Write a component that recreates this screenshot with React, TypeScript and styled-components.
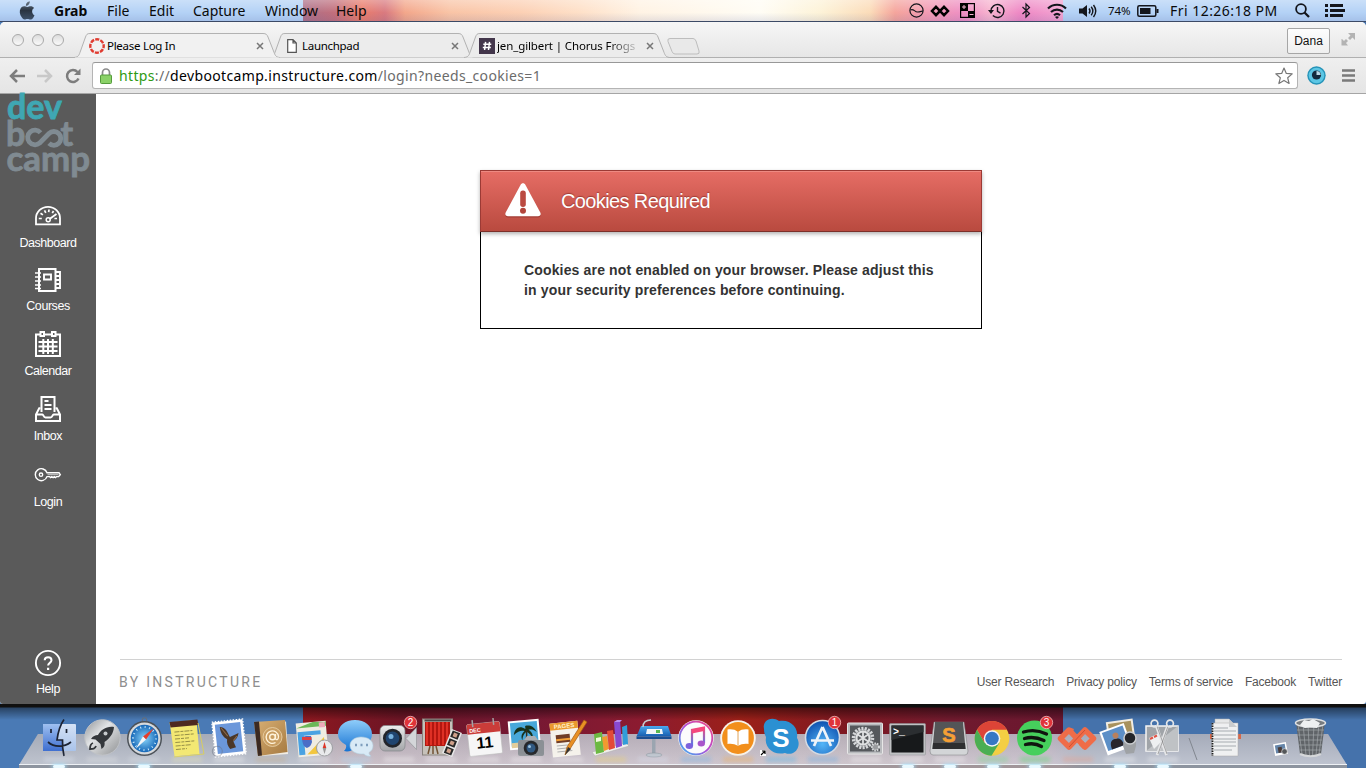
import React from "react";
import styled, { createGlobalStyle } from "styled-components";

const lucida = `"Noto Sans", "Open Sans", sans-serif`;
const helvetica = `"Liberation Sans", Arial, sans-serif`;

const GlobalStyle = createGlobalStyle`
  *, *::before, *::after { box-sizing: border-box; }
  body { margin: 0; overflow: hidden; }
  svg { display: block; overflow: visible; }
`;

const Desktop = styled.div`
  width: 1366px;
  height: 768px;
  display: flex;
  flex-direction: column;
  overflow: hidden;
  background: linear-gradient(90deg, #4a7ab5 0 303px, #7b1425 303px 1063px, #4572ab 1063px);
`;

/* ---------- system menu bar ---------- */

const MenuBar = styled.header`
  height: 22px;
  flex: none;
  display: flex;
  align-items: center;
  border-bottom: 1px solid #3c4a66;
  font: 14px/20px ${lucida};
  color: #0a0a0a;
  background:
    linear-gradient(180deg, rgba(255, 255, 255, 0.3), rgba(255, 255, 255, 0) 60%, rgba(60, 70, 140, 0.12)),
    linear-gradient(
      90deg,
      #b4d2f6 0 303px,
      #ad7189 303px,
      #c26f7c 335px,
      #ea7d6c 362px,
      #d97a80 385px,
      #f3a78b 405px,
      #f9c4a6 450px,
      #fcd0b4 520px,
      #fee0c8 580px,
      #fff3e4 640px,
      #fffdf5 760px,
      #fdf3d8 820px,
      #fbdcb9 870px,
      #f5a59c 895px,
      #f29ab5 930px,
      #ee8fc4 965px,
      #f7b4cf 990px,
      #ee88c4 1020px,
      #f3a4d2 1063px,
      #b4d2f6 1063px
    );
`;

const AppleSlot = styled.div`
  width: 54px;
  padding-left: 19px;
`;

const MenuItem = styled.span<{ $w: number; $bold?: boolean }>`
  width: ${(p) => p.$w}px;
  font-weight: ${(p) => (p.$bold ? 700 : 400)};
  white-space: nowrap;
`;

const StatusArea = styled.div`
  margin-left: auto;
  width: 458px;
  display: flex;
  align-items: center;
`;

const StatusSlot = styled.div<{ $w: number }>`
  width: ${(p) => p.$w}px;
  flex: none;
  display: flex;
  justify-content: center;
`;

const StatusText = styled.span<{ $w: number; $pad: number; $size: number; $ls?: number }>`
  width: ${(p) => p.$w}px;
  flex: none;
  padding-left: ${(p) => p.$pad}px;
  font-size: ${(p) => p.$size}px;
  letter-spacing: ${(p) => p.$ls ?? 0}px;
  white-space: nowrap;
`;

/* ---------- browser window ---------- */

const BrowserWindow = styled.div`
  position: relative;
  z-index: 1;
  height: 682px;
  flex: none;
  display: flex;
  flex-direction: column;
  border-radius: 5px 5px 3px 3px;
  overflow: hidden;
  background: #fff;
`;

const TabStrip = styled.div`
  height: 36px;
  flex: none;
  display: flex;
  align-items: flex-end;
  background: linear-gradient(180deg, #f6f6f6, #e6e6e6);
  box-shadow: inset 0 -1px 0 #b0b0b0;
`;

const WindowButtons = styled.div`
  width: 77px;
  height: 35px;
  padding: 0 0 2px 12px;
  display: flex;
  align-items: center;
  gap: 8px;
`;

const WindowButton = styled.span`
  width: 12px;
  height: 12px;
  border-radius: 50%;
  border: 1px solid #a9a9a9;
  background: linear-gradient(180deg, #dcdcdc, #fafafa);
`;

const TabBox = styled.div<{ $active?: boolean; $w: number }>`
  position: relative;
  z-index: ${(p) => (p.$active ? 2 : 1)};
  width: ${(p) => p.$w}px;
  height: 25px;
  flex: none;
  display: flex;
  align-items: center;
  padding-left: 12px;
`;

const TabShape = styled.svg`
  position: absolute;
  left: -2px;
  top: 0;
`;

const TabIcon = styled.span`
  position: relative;
  width: 16px;
  height: 16px;
  flex: none;
  display: flex;
  align-items: center;
  justify-content: center;
`;

const TabTitle = styled.span<{ $fade?: boolean; $ls?: number }>`
  position: relative;
  width: 141px;
  margin-left: 2px;
  margin-right: 8px;
  flex: none;
  overflow: hidden;
  white-space: nowrap;
  font: 11.5px/18px ${lucida};
  letter-spacing: ${(p) => p.$ls ?? 0}px;
  color: #000;
  ${(p) => p.$fade && "mask-image: linear-gradient(90deg, #000 110px, transparent 145px);"}
`;

const CloseMark = styled.svg`
  position: relative;
  flex: none;
`;

const NewTab = styled.svg`
  margin-bottom: 3px;
`;

const UserButton = styled.div`
  width: 43px;
  height: 26px;
  margin: 0 11px 4px auto;
  border: 1px solid #a6a6a6;
  border-radius: 2px;
  background: linear-gradient(180deg, #fdfdfd, #efefef);
  font: 12px/25px ${helvetica};
  text-align: center;
  color: #111;
`;

const Expand = styled.svg`
  margin: 0 10px 11px 0;
`;

const Toolbar = styled.div`
  height: 36px;
  flex: none;
  display: flex;
  align-items: center;
  background: linear-gradient(180deg, #efefef, #e5e5e5);
  border-bottom: 1px solid #a5a5a5;
`;

const NavButtons = styled.div`
  width: 92px;
  padding-left: 9px;
  display: flex;
  align-items: center;
  gap: 12px;
`;

const Omnibox = styled.div`
  width: 1206px;
  height: 27px;
  display: flex;
  align-items: center;
  padding: 0 4px 0 7px;
  border: 1px solid #b4b4b4;
  border-top-color: #989898;
  border-radius: 3px;
  background: #fff;
`;

const Url = styled.span`
  margin-left: 7px;
  flex: 1;
  font: 14px/24px ${lucida};
  letter-spacing: 0.35px;
  color: #6b6b6b;
  white-space: nowrap;
`;

const UrlScheme = styled.span`
  color: #2d9a12;
`;

const UrlHost = styled.span`
  color: #000;
`;

const ToolbarEnd = styled.div`
  flex: 1;
  padding: 0 11px 0 9px;
  display: flex;
  align-items: center;
  justify-content: space-between;
`;

/* ---------- page ---------- */

const Page = styled.div`
  flex: 1;
  display: flex;
  min-height: 0;
`;

const Sidebar = styled.nav`
  width: 96px;
  flex: none;
  display: flex;
  flex-direction: column;
  background: #5a5a5a;
`;

const LogoBox = styled.div`
  height: 108px;
  flex: none;
`;

const NavItem = styled.a<{ $h: number; $gap?: number; $last?: boolean }>`
  height: ${(p) => p.$h}px;
  flex: none;
  display: flex;
  flex-direction: column;
  align-items: center;
  gap: ${(p) => p.$gap ?? 6}px;
  ${(p) => p.$last && "margin-top: auto;"}
  font: 12.5px/16px ${helvetica};
  letter-spacing: -0.45px;
  color: #fff;
`;

const NavIcon = styled.span`
  height: 26px;
`;

const Content = styled.main`
  flex: 1;
  display: flex;
  flex-direction: column;
  align-items: flex-start;
  padding: 76px 24px 0 24px;
`;

const Notice = styled.section`
  width: 502px;
  height: 159px;
  margin-left: 360px;
  border: 1px solid #000;
  border-top: 0;
`;

const NoticeHeader = styled.div`
  height: 62px;
  margin: 0 -1px;
  display: flex;
  align-items: center;
  padding-left: 24px;
  border: 1px solid #9c3a35;
  border-bottom-color: #7c302a;
  background: linear-gradient(180deg, #e66d65, #b94a3f);
  box-shadow: inset 0 1px 0 #ee8a82, 0 2px 4px rgba(0, 0, 0, 0.3);
`;

const NoticeTitle = styled.h2`
  margin: 0 0 0 20px;
  font: 400 20px/26px ${helvetica};
  letter-spacing: -0.62px;
  color: #fff;
  text-shadow: 0 -1px 1px rgba(90, 20, 15, 0.45);
`;

const NoticeText = styled.p`
  margin: 28px 0 0 43px;
  width: 440px;
  font: 700 14px/20px ${helvetica};
  letter-spacing: 0.155px;
  color: #333;
`;

const Footer = styled.footer`
  width: 100%;
  height: 45px;
  margin-top: auto;
  padding-bottom: 1px;
  display: flex;
  align-items: center;
  justify-content: space-between;
  border-top: 1px solid #d2d2d2;
`;

const Brand = styled.span`
  margin-left: -1px;
  font: 400 14px/18px Roboto, sans-serif;
  letter-spacing: 2.3px;
  color: #8e8e8e;
`;

const FooterLinks = styled.div`
  display: flex;
  gap: 12px;
`;

const FooterLink = styled.a`
  font: 12px/16px ${helvetica};
  letter-spacing: -0.2px;
  color: #555;
  white-space: nowrap;
`;

/* ---------- dock ---------- */

const DockArea = styled.div`
  position: relative;
  flex: 1;
  padding: 12px 0 0 38px;
  background:
    linear-gradient(180deg, #101010 0 3px, rgba(0, 0, 0, 0.45) 4px, rgba(0, 0, 0, 0) 16px),
    linear-gradient(
      90deg,
      transparent 0 303px,
      #8d1820 303px,
      #6c1525 400px,
      #741833 520px,
      #8c1b30 640px,
      #9c2018 740px,
      #7c1822 850px,
      #701a2e 950px,
      #6b1730 1063px,
      transparent 1063px
    );
`;

const Shelf = styled.div`
  position: absolute;
  left: 19px;
  top: 30px;
  width: 1328px;
  height: 31px;
  clip-path: polygon(19px 0, 1309px 0, 1328px 100%, 0 100%);
  background:
    linear-gradient(180deg, rgba(135, 140, 155, 0.3), rgba(215, 218, 226, 0.35)),
    linear-gradient(90deg, #b2b8c4 0 284px, #c5b3bb 320px, #c9bbc4 600px, #cabcc2 860px, #c8bac6 1030px, #b2b8c6 1060px);
`;

const ShelfEdge = styled.div`
  position: absolute;
  left: 19px;
  top: 60px;
  width: 1328px;
  height: 4px;
  border-top: 1px solid #eef1f5;
  background: linear-gradient(90deg, #8d949f 0 284px, #a1969a 320px 1040px, #8d949f 1070px);
`;

const DockRow = styled.div`
  position: relative;
  display: flex;
`;

const DockSlot = styled.div<{ $w?: number }>`
  width: ${(p) => p.$w ?? 42.45}px;
  height: 52px;
  flex: none;
  display: flex;
  flex-direction: column;
  justify-content: space-between;
  align-items: center;
`;

const Reflection = styled.span<{ $c: string }>`
  width: 30px;
  height: 5px;
  margin-top: -4px;
  background: ${(p) => p.$c};
  opacity: 0.32;
  filter: blur(2px);
`;

const RunningLight = styled.span<{ $on?: boolean }>`
  width: 12px;
  height: 3px;
  border-radius: 2px;
  background: ${(p) => (p.$on ? "#e9f9ff" : "transparent")};
  box-shadow: ${(p) => (p.$on ? "0 0 4px 1px #a9e2fb" : "none")};
`;

/* ---------- icons ---------- */

const AppleLogo = () => (
  <svg width="16" height="19" viewBox="0 0 16 19">
    <defs>
      <linearGradient id="apple" x1="0" y1="0" x2="0" y2="1">
        <stop offset="0" stopColor="#6a7784" />
        <stop offset="0.5" stopColor="#2a3441" />
        <stop offset="1" stopColor="#3d5068" />
      </linearGradient>
    </defs>
    <path
      fill="url(#apple)"
      d="M10.8.3c.1 1.300-.4 2.400-1.100 3.200-.7.800-1.800 1.400-2.800 1.300-.1-1.200.4-2.400 1.100-3.100C8.700.900 9.900.4 10.800.3zM15.500 14.300c-.5 1.200-.8 1.700-1.400 2.600-.9 1.300-1.800 1.700-2.700 1.700-1 0-1.600-.6-2.900-.6s-2 .6-2.900.6c-1 0-1.900-.8-2.700-2C.5 13.300.2 9.600 1.600 7.400c.8-1.300 2.100-2.100 3.400-2.100 1.400 0 2.300.7 3.400.7 1.100 0 1.800-.7 3.400-.7 1.200 0 2.500.6 3.300 1.700-2.900 1.600-2.400 5.900.4 7.300z"
    />
  </svg>
);

const SiteTab = ({ title, icon, active, fade, w, ls }: { title: string; icon: React.ReactNode; active?: boolean; fade?: boolean; w: number; ls?: number }) => (
  <TabBox $active={active} $w={w}>
    <TabShape width="204" height="25" viewBox="0 0 204 25">
      <path
        d="M-1 24.500C4 24 4 22 5.500 18L10.500 4C11.500 1.500 12 .5 15 .5H188c3 0 4 1 5 3.500l5.500 14c1.500 4 2 6 6 6.500"
        fill={active ? "#f1f1f1" : "#ececec"}
        stroke="#b2b2b2"
      />
      {active && <path d="M0 25H204" stroke="#efefef" strokeWidth="1" />}
    </TabShape>
    <TabIcon>{icon}</TabIcon>
    <TabTitle $fade={fade} $ls={ls}>{title}</TabTitle>
    <CloseMark width="8" height="8" viewBox="0 0 8 8">
      <path d="M1 1l6 6M7 1L1 7" stroke="#777" strokeWidth="1.500" />
    </CloseMark>
  </TabBox>
);

const CanvasRing = () => (
  <svg width="16" height="16" viewBox="0 0 16 16">
    <circle cx="8" cy="8" r="6.700" fill="none" stroke="#e03c31" strokeWidth="2.400" strokeDasharray="4.100 1.160" strokeDashoffset="2" />
  </svg>
);

const PageIcon = () => (
  <svg width="10" height="14" viewBox="0 0 10 14">
    <path d="M.7.7h5.300l3.300 3.300v9.300H.7z M6 .7v3.300h3.300" fill="#fff" stroke="#555" strokeWidth="1.200" />
  </svg>
);

const HashIcon = () => (
  <svg width="16" height="16" viewBox="0 0 16 16">
    <rect width="16" height="16" fill="#43364b" />
    <path d="M6.600 3.800L5.600 12M10.500 3.800L9.500 12M4.300 6.300h8M3.800 9.600h8" stroke="#fff" strokeWidth="1.500" />
  </svg>
);

const DashboardIcon = () => (
  <svg width="26" height="26" viewBox="0 0 26 26" fill="none" stroke="#fff">
    <path d="M1 22.300v-6a12 11.500 0 0 1 24 0v6z" strokeWidth="1.800" />
    <path d="M3.800 16.500h3M5.500 11.200l2.400 1.700M9.500 8.300l1.300 2.500M14 7.500l-.3 2.700M18.500 9l-1.200 2.200M22 16.500h-2.600" strokeWidth="1.700" />
    <path d="M14.500 17l7-5" strokeWidth="1.900" />
    <circle cx="13.200" cy="17.800" r="2" strokeWidth="1.500" />
  </svg>
);

const CoursesIcon = () => (
  <svg width="26" height="26" viewBox="0 0 26 26" fill="none" stroke="#fff" strokeWidth="2">
    <path d="M4 2h16.500v22H4z" />
    <path d="M9 7.500h7v5H9z" strokeWidth="1.900" />
    <path d="M0 6h6M0 10h6M0 14h6M0 18h6M0 21.500h6" strokeWidth="1.700" />
    <path d="M21 5h4v16h-4M21 9h4M21 13h4M21 17h4" strokeWidth="1.900" />
  </svg>
);

const CalendarIcon = () => (
  <svg width="26" height="26" viewBox="0 0 26 26" fill="none" stroke="#fff" strokeWidth="2">
    <path d="M1 3.500h24v21.500H1z" />
    <path d="M3.500 11h19M3.500 15.500h19M3.500 20h19M8.300 8v15M13 8v15M17.800 8v15" strokeWidth="2" />
    <path d="M5.500 1h3.500v4H5.500zM17 1h3.500v4H17z" fill="#5a5a5a" strokeWidth="2" />
  </svg>
);

const InboxIcon = () => (
  <svg width="26" height="26" viewBox="0 0 26 26" fill="none" stroke="#fff" strokeWidth="2">
    <path d="M6.500 16V1h13v15" />
    <path d="M9.500 5h4M9.500 9h7M9.500 13h7" strokeWidth="1.800" />
    <path d="M5.500 12.200H4.200L1 18.500V25h24v-6.500l-3.200-6.300h-1.300M1 18.500h6.500c1 0 1 3 3 3h5c2 0 2-3 3-3H25" />
  </svg>
);

const KeyIcon = () => (
  <svg width="26" height="26" viewBox="0 0 26 26" fill="none" stroke="#fff" strokeWidth="1.400">
    <path d="M12 10.800h12l1.300 1.800-1.700 2h-2l-1 1-1.300-1-1.200 1-1.300-1-1.300 1-1-1H12a6 6 0 1 1 0-3.800z" />
    <circle cx="6" cy="12.700" r="1.700" />
    <path d="M12.500 12.700h11" strokeWidth="0.700" />
  </svg>
);

const HelpIcon = () => (
  <svg width="26" height="26" viewBox="0 0 26 26" fill="none" stroke="#fff" strokeWidth="1.900">
    <circle cx="13" cy="13" r="12.100" />
    <path d="M9.700 10.300c0-4.200 6.800-4.200 6.800 0 0 2.700-3.400 2.500-3.400 5.200" strokeWidth="2" />
    <path d="M13.100 17.700v2.200" strokeWidth="2.200" />
  </svg>
);

const LogoText = styled.text`
  font: 700 34px Lato, sans-serif;
  stroke-width: 0.8px;
`;

const teal = "#3fa7b3";
const slate = "#808b92";

const Logo = () => (
  <svg width="96" height="90" viewBox="0 0 96 90">
    <LogoText x="7" y="25" fill={teal} stroke={teal} textLength="55" lengthAdjust="spacingAndGlyphs">dev</LogoText>
    <LogoText x="6" y="52" fill={slate} stroke={slate}>b</LogoText>
    <path d="M40.500 38.700A7.300 7.300 0 1 0 39.500 49.200L49 39.500A6.900 6.900 0 1 1 49 49.300" fill="none" stroke={slate} strokeWidth="4.800" />
    <LogoText x="60.500" y="52" fill={slate} stroke={slate}>t</LogoText>
    <LogoText x="6.500" y="77" fill={slate} stroke={slate} textLength="83.500" lengthAdjust="spacingAndGlyphs">camp</LogoText>
  </svg>
);

const WarningIcon = () => (
  <svg width="36" height="36" viewBox="0 0 36 36">
    <path d="M15.500 3c1-2.200 4-2.200 5 0L35.300 30.500c1 2.200 0 4-2.300 4H3c-2.300 0-3.300-1.800-2.300-4z" fill="#8e3029" opacity="0.6" />
    <path d="M15.500 2c1-2.200 4-2.200 5 0L35.300 29.500c1 2.200 0 3.700-2.300 3.700H3c-2.300 0-3.300-1.500-2.300-3.700z" fill="#fff" />
    <rect x="15.200" y="7.500" width="5.600" height="16.500" rx="2.700" fill="#bb4a41" />
    <circle cx="18" cy="27.700" r="3" fill="#b3453b" />
  </svg>
);

/* Each dock drawing lives on a tile 42 units high. */
const Tile = ({ children, w = 42 }: { children: React.ReactNode; w?: number }) => (
  <svg width={w} height="42" viewBox={`0 0 ${w} 42`}>{children}</svg>
);

const BadgeLabel = styled.text`
  font: 10px ${helvetica};
  text-anchor: middle;
  fill: #fff;
`;

const Badge = ({ n }: { n: number }) => (
  <g>
    <circle cx="32.500" cy="6.500" r="6.200" fill="#e0343a" stroke="#f3b9b9" strokeWidth="0.800" />
    <BadgeLabel x="32.500" y="10">{n}</BadgeLabel>
  </g>
);

const Finder = () => (
  <Tile>
    <defs>
      <linearGradient id="fl" x1="0" y1="0" x2="0" y2="1"><stop offset="0" stopColor="#9fc0f0" /><stop offset="1" stopColor="#3f6fd0" /></linearGradient>
      <linearGradient id="fr" x1="0" y1="0" x2="0" y2="1"><stop offset="0" stopColor="#d5e2f5" /><stop offset="1" stopColor="#a9c3ea" /></linearGradient>
    </defs>
    <rect x="5" y="8" width="33" height="27" rx="1" fill="url(#fr)" />
    <path d="M5 8h19c-3 6-4 10-5 16h5c0 4 0 7 1 11H5z" fill="url(#fl)" />
    <path d="M26 3.500c-5 7-6 13-7 20.500h5.500c-.2 6 .3 11 1.500 16M10 26c6 5.500 16 5.500 23 0M13 13v4M28.500 13v4" fill="none" stroke="#1c2333" strokeWidth="1.700" />
  </Tile>
);

const Launchpad = () => (
  <Tile>
    <defs><linearGradient id="lp" x1="0" y1="0" x2="1" y2="1"><stop offset="0" stopColor="#8e9195" /><stop offset="0.400" stopColor="#e2e4e6" /><stop offset="1" stopColor="#8e9092" /></linearGradient></defs>
    <circle cx="21.500" cy="21.500" r="17.700" fill="url(#lp)" stroke="#bfc2c6" />
    <path d="M33 11c-8-1-13 3-16 8-3 0-5 1-7 4l4.500.5 5 4.500 1 5c3-2 3.500-4 3-7 5-3.500 9-8 9.500-15z" fill="#34373b" />
    <circle cx="24.500" cy="17.500" r="2" fill="#c6c9cc" />
    <path d="M12 27c-3 1-3 4-3 6 3 0 5 0 6-3" fill="none" stroke="#34373b" strokeWidth="1.800" />
  </Tile>
);

const Safari = () => (
  <Tile>
    <defs><radialGradient id="sf"><stop offset="0" stopColor="#8bd6fb" /><stop offset="1" stopColor="#1768b8" /></radialGradient></defs>
    <circle cx="21.500" cy="4" r="2.300" fill="none" stroke="#6a6e74" />
    <circle cx="21.500" cy="22.500" r="17.500" fill="#4b5158" />
    <circle cx="21.500" cy="22.500" r="16" fill="#d6d9dc" />
    <circle cx="21.500" cy="22.500" r="13.700" fill="url(#sf)" />
    <circle cx="21.500" cy="22.500" r="11.500" fill="none" stroke="#c5e8fb" strokeDasharray="1 3.500" strokeWidth="2" />
    <path d="M31 12L20 20.500l3 3z" fill="#e53e2c" />
    <path d="M12.500 33l7.500-12.500 3 3z" fill="#f4f6f8" />
  </Tile>
);

const Notes = () => (
  <Tile>
    <g transform="rotate(-5 21 22)">
      <path d="M5 5h27v34H7z" fill="#f3e873" />
      <path d="M5 4.500h28l.5 5.500H5.500z" fill="#4d2a20" />
      <path d="M9 15h18M9 18.500h20M9 22h14M9 25.500h19M9 29h16M9 32.500h11" stroke="#8e8843" strokeWidth="0.900" strokeDasharray="5 1 3 1" />
    </g>
    <path d="M32 7l6 31-30 3" fill="none" stroke="#d8ce60" />
  </Tile>
);

const Mail = () => (
  <Tile>
    <g transform="rotate(-6 21 22)">
      <rect x="7" y="6" width="28" height="32" fill="#6b97da" stroke="#fff" strokeWidth="2.500" />
      <rect x="5.500" y="4.500" width="31" height="35" fill="none" stroke="#fff" strokeWidth="1.300" strokeDasharray="1.500 1.500" />
      <path d="M13 10c6 1 7 6 9 11l9-3c-1 4-3 6-6 8l2 6-6 1c-2-3-3-6-2-10-4-3-6-7-6-13z" fill="#4b3728" />
      <path d="M14 11l6 9M25 25l4-4" stroke="#8d6b4b" />
      <circle cx="8" cy="34" r="5" fill="none" stroke="#6b7484" opacity="0.5" />
    </g>
  </Tile>
);

const Contacts = () => (
  <Tile>
    <defs><linearGradient id="ct" x1="0" y1="0" x2="1" y2="1"><stop offset="0" stopColor="#d9b075" /><stop offset="1" stopColor="#a5793f" /></linearGradient></defs>
    <path d="M36 5l2 33-28 2v-3z" fill="#f1ede4" />
    <path d="M4 6l31-2 2.500 32L8 40z" fill="url(#ct)" />
    <path d="M4 6l5-.4L12 39.500l-4 .5z" fill="#3b2a22" />
    <circle cx="22.500" cy="21" r="9.500" fill="#c99e62" stroke="#ecd6ad" strokeWidth="0.800" />
    <circle cx="22.500" cy="21" r="2.800" fill="none" stroke="#fff4dc" strokeWidth="1.400" />
    <path d="M25.500 18v4.500c.5 2 3 1.500 3-2a6.200 6.200 0 1 0-3 6" fill="none" stroke="#fff4dc" strokeWidth="1.300" />
  </Tile>
);

const Maps = () => (
  <Tile>
    <g transform="rotate(-5 20 22)">
      <rect x="4" y="6" width="30" height="34" fill="#efece2" />
      <path d="M4 11h30V7l-13-1z" fill="#6cb858" />
      <path d="M5 15h23v4H11v19H5z" fill="#49a2e2" />
      <path d="M13 38l18-16v8l-8 8z" fill="#f2c63f" />
      <path d="M27 7h6v5h-6z" fill="#efaabb" />
    </g>
    <path d="M9 21l4-1 5 0 1 6c-1 4-3 5-5 6-3-1-5-4-5-11z" fill="#4b6ec6" />
    <path d="M9 21h9.500v3H9z" fill="#dd4040" />
    <circle cx="31.500" cy="32" r="8" fill="#e9eaec" stroke="#9b9da0" />
    <path d="M31.500 26l1.800 6h-3.600z" fill="#dd3527" /><path d="M31.500 38l1.800-6h-3.600z" fill="#999" />
  </Tile>
);

const Messages = () => (
  <Tile>
    <defs><linearGradient id="ms" x1="0" y1="0" x2="0" y2="1"><stop offset="0" stopColor="#8fcdfa" /><stop offset="1" stopColor="#1672d2" /></linearGradient></defs>
    <path d="M20 4c10 0 17 6 17 14s-7 14-17 14c-3 3-7 4-11 3 2-2 2.500-4 2-6-5-3-8-6-8-11C3 10 10 4 20 4z" fill="url(#ms)" />
    <path d="M26 21c7 0 12 3.500 12 8.500 0 3-1 5-4 7 0 1.500.5 2.500 2 3.500-3 .5-5 0-7-2-8 .5-14-3-14-8.500 0-5 5-8.500 11-8.500z" fill="#d9eaf6" stroke="#b3cede" strokeWidth="0.600" />
    <path d="M20 29h2M25.500 29h2M31 29h2" stroke="#7f9ebd" strokeWidth="2.300" />
  </Tile>
);

const FaceTime = () => (
  <Tile>
    <defs><linearGradient id="ft" x1="0" y1="0" x2="0" y2="1"><stop offset="0" stopColor="#eceded" /><stop offset="1" stopColor="#a3a5a8" /></linearGradient></defs>
    <rect x="2" y="9.500" width="25" height="25.500" rx="5" fill="url(#ft)" stroke="#84878b" strokeWidth="0.700" />
    <path d="M28 22.500l10.500-11v22z" fill="#d4d6d9" stroke="#8e9094" strokeWidth="0.600" />
    <circle cx="14.500" cy="22.300" r="9.500" fill="#22252a" /><circle cx="14.500" cy="22.300" r="6.800" fill="#20456f" /><circle cx="13" cy="20.500" r="2.500" fill="#79b2dd" />
    <Badge n={2} />
  </Tile>
);

const PhotoBooth = () => (
  <Tile>
    <rect x="2.500" y="3" width="30" height="36" fill="#c6c1ba" stroke="#88827d" />
    <rect x="5" y="6" width="25" height="24" fill="#b3160f" />
    <path d="M7 6v23M11 6v23M15 6v23M19 6v23M23 6v23M27 6v23" stroke="#df3025" strokeWidth="2" />
    <path d="M4.500 4.500h27" stroke="#4d4946" strokeWidth="2" />
    <path d="M8 38l2-8M13 38v-8M18 38l-2-8" stroke="#725234" strokeWidth="1.500" />
    <g transform="rotate(22 32 27)"><rect x="26.500" y="14" width="11" height="26" fill="#e8e8e8" /><path d="M28 15h8v7h-8zM28 23.500h8v7h-8zM28 32h8v7h-8z" fill="#272727" /><path d="M30 16.500h4v4h-4zM30 25h4v4h-4zM30 33.500h4v4h-4z" fill="#cfa08a" /></g>
  </Tile>
);

const DayNumber = styled.text`
  font: 700 16px ${helvetica};
  text-anchor: middle;
`;
const MonthName = styled.text`
  font: 700 5.5px ${helvetica};
  fill: #fff;
`;

const Calendar = () => (
  <Tile>
    <g transform="rotate(-6 21 22)">
      <rect x="5" y="7" width="33" height="32" rx="1.500" fill="#f6f6f6" stroke="#bababa" strokeWidth="0.600" />
      <path d="M5 8.500Q5 7 6.500 7h30Q38 7 38 8.500V17H5z" fill="#ca3c39" />
      <MonthName x="7" y="15.500">DEC</MonthName>
      <DayNumber x="21.500" y="32">11</DayNumber>
      <path d="M11 10V3M32 10V3" stroke="#a3a3a3" strokeWidth="1.500" />
    </g>
  </Tile>
);

const IPhoto = () => (
  <Tile>
    <g transform="rotate(-5 20 20)">
      <rect x="4" y="4" width="31" height="29" fill="#fff" /><rect x="6" y="6" width="27" height="24" fill="#48a8da" />
      <path d="M6 26h27v5H6z" fill="#e2cd9a" />
      <path d="M21 13c-7-5-11 0-12 5 5-4 8-4 11-3-4 3-4 6-3 9 1-5 3-7 5-8 3 2 5 5 5 8 2-4 0-8-3-10 3 0 5 0 8 3-2-6-7-8-11-7z" fill="#17321c" />
      <path d="M22 14c0 8-1 12-3 17" fill="none" stroke="#342c1c" strokeWidth="1.500" />
    </g>
    <rect x="13" y="24" width="26" height="16" rx="2" fill="#8b9095" /><path d="M19 24l3-4h8l3 4z" fill="#abafb3" />
    <circle cx="26" cy="32" r="7.300" fill="#26282b" /><circle cx="26" cy="32" r="4.500" fill="#315981" /><circle cx="24.500" cy="30.500" r="1.500" fill="#9ec4df" />
  </Tile>
);

const PagesLabel = styled.text`
  font: 700 6px ${helvetica};
  fill: #fff3cf;
`;

const Pages = () => (
  <Tile>
    <g transform="rotate(-6 20 22)">
      <rect x="4" y="6" width="28" height="34" fill="#f5f2eb" /><path d="M4 6h28v7H4z" fill="#ea982e" />
      <PagesLabel x="8" y="11.700">PAGES</PagesLabel>
      <rect x="9" y="18" width="14" height="8" fill="#703d26" /><path d="M9 22h14v2H9z" fill="#f3a036" />
      <path d="M9 29h16M9 32h12M9 35h15" stroke="#b0b0b0" />
    </g>
    <path d="M37 4l3 2-17 27-5 6 2-8z" fill="#e99023" stroke="#a35c12" strokeWidth="0.700" />
    <path d="M18 39l3-8 3 2z" fill="#343434" />
  </Tile>
);

const Numbers = () => (
  <Tile>
    <path d="M2 36l34-9 3 3-34 10z" fill="#efefec" stroke="#aaa" strokeWidth="0.500" />
    <path d="M4 18l8-2 2 20-8 2z" fill="#6cb942" /><path d="M6 22l5-1v4l-5 1z" fill="#effad8" />
    <path d="M12 21l5-1 2 13-5 2z" fill="#f19a2f" /><path d="M17 15l6-1 2 18-6 2z" fill="#e34a37" />
    <path d="M24 6l6-2 2 26-6 2z" fill="#8749d0" /><path d="M32 11l5-2 1 19-5 1z" fill="#319dd9" />
    <path d="M24 6l3-2 5 0-2 2z" fill="#b88bea" />
  </Tile>
);

const Keynote = () => (
  <Tile>
    <defs><linearGradient id="kn" x1="0" y1="0" x2="0" y2="1"><stop offset="0" stopColor="#4aa8ef" /><stop offset="1" stopColor="#155cae" /></linearGradient></defs>
    <path d="M20 22h3.500v16H20z" fill="#9ba5b0" /><ellipse cx="22" cy="39" rx="8" ry="2" fill="#bdc4cc" stroke="#89919b" strokeWidth="0.500" />
    <path d="M9 10h27l3.500 10.500h-35z" fill="url(#kn)" /><path d="M4.500 20.500h35V23h-35z" fill="#1b4e91" />
    <path d="M15 13h15l1 5H14z" fill="#f2f5f7" /><path d="M24 14h4v3h-4z" fill="#59b951" />
    <path d="M11 11c0-5 3-7 8-7" fill="none" stroke="#c6ccd3" strokeWidth="1.500" />
  </Tile>
);

const ITunes = () => (
  <Tile>
    <defs>
      <linearGradient id="itr" x1="0" y1="1" x2="1" y2="0"><stop offset="0" stopColor="#31b9f3" /><stop offset="0.500" stopColor="#b14bd6" /><stop offset="1" stopColor="#f5487d" /></linearGradient>
      <linearGradient id="itn" x1="0" y1="0" x2="0" y2="1"><stop offset="0" stopColor="#f5487d" /><stop offset="1" stopColor="#4a7ef0" /></linearGradient>
    </defs>
    <circle cx="21" cy="22" r="17.800" fill="#f3f3f5" /><circle cx="21" cy="22" r="16.300" fill="#fbfbfc" stroke="url(#itr)" strokeWidth="1.800" />
    <path d="M17 30V14l12-2.500V27" fill="none" stroke="url(#itn)" strokeWidth="2.200" /><path d="M17 13.500l12-2.500v4l-12 2.500z" fill="#f5487d" />
    <ellipse cx="14.300" cy="30" rx="3.700" ry="3" fill="#7b62dc" /><ellipse cx="26.300" cy="27.500" rx="3.700" ry="3" fill="#a955cb" />
  </Tile>
);

const IBooks = () => (
  <Tile>
    <circle cx="21" cy="22" r="17.800" fill="#f7f3ec" /><circle cx="21" cy="22" r="15.900" fill="#f28f1c" />
    <path d="M21 16c-3-2.500-6-3-10.500-2.500V28c4-.5 7.500 0 10.500 2 3-2 6.500-2.500 10.500-2V13.500C27 13 24 13.500 21 16z" fill="#fff" /><path d="M21 16v14" stroke="#e0a45b" />
  </Tile>
);

const SkypeLetter = styled.text`
  font: 700 26px ${helvetica};
  text-anchor: middle;
  fill: #fff;
`;

const Skype = () => (
  <Tile>
    <path d="M4 13C2 4 12 0 19 5c11-2 20 6 18 17 5 8-2 19-12 15-12 3-21-6-19-16-1-2-2-4-2-8z" fill="#2b90d2" />
    <SkypeLetter x="21" y="31">S</SkypeLetter>
    <path d="M0 34h6v6H0z" fill="#fff" /><path d="M1 39l4-4M2 35h3v3" fill="none" stroke="#000" strokeWidth="1.200" />
  </Tile>
);

const AppStore = () => (
  <Tile>
    <defs><radialGradient id="as" cx="0.500" cy="0.700" r="0.700"><stop offset="0" stopColor="#53b6f8" /><stop offset="1" stopColor="#0f53b1" /></radialGradient></defs>
    <circle cx="20.500" cy="21.500" r="17.800" fill="#d5dae2" /><circle cx="20.500" cy="21.500" r="16.200" fill="url(#as)" />
    <path d="M20.500 11l-8.500 19M20.500 11l8.500 19M9 24.500h23" fill="none" stroke="#eef4f9" strokeWidth="2.700" />
    <Badge n={1} />
  </Tile>
);

const Preferences = () => (
  <Tile>
    <rect x="2.500" y="7" width="35" height="31" rx="1" fill="#b9bbbe" stroke="#e7e7e7" /><rect x="5" y="9.500" width="30" height="26" fill="#55585c" />
    <circle cx="18" cy="22" r="9.500" fill="#888b8f" stroke="#d6d8da" strokeWidth="3.500" strokeDasharray="2 1.300" />
    <circle cx="18" cy="22" r="6.500" fill="#595c60" stroke="#dfe1e2" strokeWidth="2" /><path d="M18 15v14M12 18l12 8M12 26l12-8" stroke="#dfe1e2" strokeWidth="1.800" />
    <circle cx="30.500" cy="31" r="3.500" fill="#9a9c9f" stroke="#d8dadc" strokeWidth="2" strokeDasharray="1.500 1" />
  </Tile>
);

const PromptText = styled.text`
  font: 700 10px "Liberation Mono", monospace;
  fill: #fff;
`;

const Terminal = () => (
  <Tile>
    <rect x="2.500" y="7.500" width="36" height="31.500" rx="1" fill="#bfc1c3" stroke="#8c8e90" strokeWidth="0.500" /><rect x="4.500" y="9.500" width="32" height="27" fill="#17191b" />
    <path d="M4.500 24l32-8V9.500h-32z" fill="#2b2e31" /><PromptText x="6" y="19">&gt;_</PromptText>
  </Tile>
);

const SublimeLetter = styled.text`
  font: 700 20px ${helvetica};
  text-anchor: middle;
  fill: #f6a035;
  stroke: #f6a035;
  stroke-width: 0.7px;
`;

const Sublime = () => (
  <Tile>
    <path d="M5 6h30l4 29q0 4-3 4H4q-3 0-3-4z" fill="#d3d5d7" stroke="#77797b" strokeWidth="0.500" />
    <path d="M6 6h28l2.500 27h-33z" fill="#545557" /><path d="M4 27h32l.5 6h-33z" fill="#2d2e30" /><SublimeLetter x="20" y="25.500">S</SublimeLetter>
  </Tile>
);

const Chrome = () => (
  <Tile>
    <circle cx="20" cy="22.500" r="17.300" fill="#f4ce43" />
    <path d="M5 13.800A17.300 17.300 0 0 1 35 13.800H20l-7.500 13z" fill="#dd4437" />
    <path d="M5 13.800A17.300 17.300 0 0 0 19.500 39.800L27.500 26.800l-15 0z" fill="#4aae53" />
    <circle cx="20" cy="22.500" r="8.300" fill="#f3f5f7" /><circle cx="20" cy="22.500" r="6.800" fill="#3678c4" />
  </Tile>
);

const Spotify = () => (
  <Tile>
    <circle cx="20.500" cy="22" r="17.500" fill="#46cf5c" />
    <path d="M9.500 16c8-2.500 16-1.500 23 2M10.500 22.500c7-2 13-1 19.500 2M11.500 28.500c6-1.500 11-1 16 2" fill="none" stroke="#10150f" strokeWidth="3.300" strokeLinecap="round" />
    <Badge n={3} />
  </Tile>
);

const DevBootcamp = () => (
  <Tile>
    <g fill="none" stroke="#ef6c48" strokeWidth="5.500" strokeLinejoin="round">
      <path d="M16 15.500L12 14 3.500 22.500l8.500 8.500L28 14l8.500 8.500L28 31l-4-4" />
      <path d="M12 14l16 17" />
    </g>
    <path d="M12 31L28 14" stroke="#cf4f31" strokeWidth="1" />
  </Tile>
);

const Preview = () => (
  <Tile>
    <g transform="rotate(-8 24 14)"><rect x="8" y="4" width="27" height="25" fill="#f1ece1" /><rect x="10" y="6" width="23" height="19" fill="#a8925e" /></g>
    <g transform="rotate(-20 16 24)"><rect x="4" y="11" width="26" height="25" fill="#fff" /><rect x="6" y="13" width="22" height="19" fill="#5c8fc7" /><path d="M10 32c0-7 2-9 6-9s7 2 7 9z" fill="#28252b" /><circle cx="18" cy="20" r="3" fill="#b8805d" /></g>
    <path d="M25 21h12v9l-2 7-8 1-3-8z" fill="#9fa2a5" /><circle cx="31" cy="22" r="6" fill="#232529" stroke="#cacccf" strokeWidth="1.500" />
  </Tile>
);

const GrabIcon = () => (
  <Tile>
    <rect x="4" y="10" width="32" height="25" fill="#a0a4a8" stroke="#f5f5f5" strokeWidth="1.500" /><path d="M4 35L36 10v25z" fill="#bfc2c5" />
    <path d="M7 22l10-5 4 7-9 9z" fill="#eef0f1" /><path d="M8 23l3-1.500M12 21l3-1.500" stroke="#df5547" strokeWidth="2" />
    <path d="M14 9L24.500 39M26 9L15 39" stroke="#e5e6e8" strokeWidth="2.800" /><path d="M14.500 9L25 38M26.500 9L16 38" stroke="#777" strokeWidth="0.600" />
    <circle cx="12.500" cy="7.500" r="3.400" fill="none" stroke="#e4e6e8" strokeWidth="1.700" /><circle cx="28" cy="7.500" r="3.400" fill="none" stroke="#e4e6e8" strokeWidth="1.700" />
  </Tile>
);

const DockDivider = () => (
  <Tile w={26}><path d="M8 22l8 22" stroke="#81868f" strokeWidth="1" /></Tile>
);

const Documents = () => (
  <Tile>
    <path d="M6 18h31v5H6z" fill="#d66849" />
    <path d="M11 3h14l8 8v20H11z" fill="#e6e7e8" stroke="#b0b0b0" strokeWidth="0.500" /><path d="M8 7h26v33H8z" fill="#eff0f1" stroke="#aaa" strokeWidth="0.500" />
    <path d="M10 12h14M10 15h22M10 19h22M10 23h22M10 26h22M10 30h22M10 34h18" stroke="#a6abb0" strokeWidth="1" />
    <path d="M25 3v8h8z" fill="#c9cbcd" /><path d="M8.500 7v33" stroke="#222" strokeWidth="1.800" strokeDasharray="1.500 1" />
  </Tile>
);

const MinimizedPhoto = () => (
  <Tile w={18}>
    <g transform="rotate(-10 9 33)"><rect x="2" y="27" width="13" height="12" fill="#fff" /><rect x="3.500" y="28.500" width="10" height="8" fill="#6686aa" /><path d="M6 31h4v5.500H6z" fill="#493b38" /></g>
    <circle cx="12.500" cy="35.500" r="2.800" fill="#54575a" stroke="#ddd" strokeWidth="0.700" />
  </Tile>
);

const Trash = () => (
  <Tile>
    <path d="M6 6l4 32c6 3 15 3 21 0l4-32z" fill="#606468" />
    <path d="M8 8l4 30M13 8l3 31M18 8l1.500 32M24 8l-1.500 32M29 8l-3 31M33 8l-4 30M7 14h27M8 19h25M9 24h23M9 29h23M10 34h21" stroke="#a2a6aa" strokeWidth="0.700" />
    <ellipse cx="20.500" cy="7" rx="15" ry="4" fill="#777b7f" stroke="#dfe1e3" strokeWidth="1.500" />
    <path d="M10 9l4-5 5 1 4-2 7 4-3 5-7-1-5 1z" fill="#eef0f1" /><path d="M10 38c6 3 15 3 21 0" fill="none" stroke="#d5d7d9" strokeWidth="2" />
  </Tile>
);

const dockItems: { name: string; icon: React.ReactNode; glow: string; on?: boolean }[] = [
  { name: "finder", icon: <Finder />, glow: "#e6edf8", on: true },
  { name: "launchpad", icon: <Launchpad />, glow: "#e9e9e9" },
  { name: "safari", icon: <Safari />, glow: "#e3e8ee", on: true },
  { name: "notes", icon: <Notes />, glow: "#f3ecaa" },
  { name: "mail", icon: <Mail />, glow: "#fff" },
  { name: "contacts", icon: <Contacts />, glow: "#c9a672" },
  { name: "maps", icon: <Maps />, glow: "#fff" },
  { name: "messages", icon: <Messages />, glow: "#aaddff", on: true },
  { name: "facetime", icon: <FaceTime />, glow: "#fff" },
  { name: "photobooth", icon: <PhotoBooth />, glow: "#fff" },
  { name: "calendar", icon: <Calendar />, glow: "#fff" },
  { name: "iphoto", icon: <IPhoto />, glow: "#fff" },
  { name: "pages", icon: <Pages />, glow: "#fff" },
  { name: "numbers", icon: <Numbers />, glow: "#f5d44d" },
  { name: "keynote", icon: <Keynote />, glow: "#dce8f8" },
  { name: "itunes", icon: <ITunes />, glow: "#5aaef3" },
  { name: "ibooks", icon: <IBooks />, glow: "#ffa62b" },
  { name: "skype", icon: <Skype />, glow: "#35b3f4" },
  { name: "appstore", icon: <AppStore />, glow: "#4fa7ef" },
  { name: "preferences", icon: <Preferences />, glow: "#fff" },
  { name: "terminal", icon: <Terminal />, glow: "#fff", on: true },
  { name: "sublime", icon: <Sublime />, glow: "#fff", on: true },
  { name: "chrome", icon: <Chrome />, glow: "#5fe07a", on: true },
  { name: "spotify", icon: <Spotify />, glow: "#30e050", on: true },
  { name: "devbootcamp", icon: <DevBootcamp />, glow: "#f59070" },
  { name: "preview", icon: <Preview />, glow: "#fff", on: true },
  { name: "grab", icon: <GrabIcon />, glow: "#fff", on: true },
];

const ink = "#14161c";

const StatusIcons = () => (
  <StatusArea>
    <StatusSlot $w={16}>
      <svg width="15" height="15" viewBox="0 0 15 15" fill="none" stroke={ink} strokeWidth="1.200">
        <circle cx="7.500" cy="7.500" r="6.600" /><path d="M1.500 7c3-2 4 2 7 2s4-1 5.500-1" />
      </svg>
    </StatusSlot>
    <StatusSlot $w={32}>
      <svg width="20" height="12" viewBox="0 0 20 12" fill="none" stroke="#000" strokeWidth="2.500">
        <path d="M8 3.800L6 1.800 2 6l4 4.200L14 1.800 18 6l-4 4.200-2-2M6 1.800l8 8.400" />
      </svg>
    </StatusSlot>
    <StatusSlot $w={23}>
      <svg width="15" height="15" viewBox="0 0 15 15">
        <rect x="0.600" y="0.600" width="13.800" height="13.800" fill="none" stroke="#000" strokeWidth="1.200" />
        <path d="M0 0h8v8H0zM8 8h7v7H8z" fill="#000" />
        <path d="M2 4h4M4 2v4M9.500 11.500h4" stroke="#f5b4d0" strokeWidth="1" />
      </svg>
    </StatusSlot>
    <StatusSlot $w={34}>
      <svg width="17" height="16" viewBox="0 0 17 16" fill="none" stroke={ink} strokeWidth="1.400">
        <path d="M3 8a6.500 6.500 0 1 1 1.900 4.600M9.500 4v4.300l3 1.800" /><path d="M0 7h6L3 11z" fill={ink} stroke="none" />
      </svg>
    </StatusSlot>
    <StatusSlot $w={26}>
      <svg width="10" height="15" viewBox="0 0 10 15" fill="none" stroke={ink} strokeWidth="1.200">
        <path d="M1.500 4l7 6.500L5 14V1l3.500 3.500-7 6.500" />
      </svg>
    </StatusSlot>
    <StatusSlot $w={35}>
      <svg width="20" height="16" viewBox="0 0 20 16" fill="none" stroke={ink} strokeWidth="2.200">
        <path d="M1 5.500c5-5 13-5 18 0M4 9c3.500-3.300 8.500-3.300 12 0M7 12.200c1.700-1.500 4.300-1.500 6 0" /><path d="M10 16l-2-2q2-1.500 4 0z" fill={ink} stroke="none" />
      </svg>
    </StatusSlot>
    <StatusSlot $w={27}>
      <svg width="18" height="14" viewBox="0 0 18 14" fill="none" stroke={ink} strokeWidth="1.400">
        <path d="M0 4.500h3.500L8 1v12L3.500 9.500H0z" fill={ink} stroke="none" /><path d="M10 4.500q2 2.500 0 5M12.200 2.800q3.300 4.200 0 8.400M14.500 1q4.500 6 0 12" />
      </svg>
    </StatusSlot>
    <StatusText $w={33} $pad={7} $size={11.5} $ls={-0.1}>74%</StatusText>
    <StatusSlot $w={28}>
      <svg width="22" height="12" viewBox="0 0 22 12">
        <rect x="0.800" y="0.800" width="18" height="10.400" rx="1.500" fill="none" stroke={ink} strokeWidth="1.500" /><rect x="3" y="3" width="10.500" height="6" fill={ink} /><path d="M20.500 4v4" stroke={ink} strokeWidth="2" />
      </svg>
    </StatusSlot>
    <StatusText $w={128} $pad={8} $size={14} $ls={0.47}>Fri 12:26:18 PM</StatusText>
    <StatusSlot $w={24}>
      <svg width="15" height="15" viewBox="0 0 15 15" fill="none" stroke={ink} strokeWidth="1.800">
        <circle cx="6" cy="6" r="4.900" /><path d="M9.500 9.500l4.500 4.500" strokeWidth="2.300" />
      </svg>
    </StatusSlot>
    <StatusSlot $w={42}>
      <svg width="20" height="13" viewBox="0 0 20 13" stroke={ink} strokeWidth="2.800">
        <path d="M0 1.500h3M5 1.500h13M0 6.500h3M5 6.500h15M0 11.500h3M5 11.500h13" />
      </svg>
    </StatusSlot>
  </StatusArea>
);

const App = () => (
  <>
    <GlobalStyle />
    <Desktop>
      <MenuBar>
        <AppleSlot><AppleLogo /></AppleSlot>
        <MenuItem $w={53} $bold>Grab</MenuItem>
        <MenuItem $w={42}>File</MenuItem>
        <MenuItem $w={44}>Edit</MenuItem>
        <MenuItem $w={72}>Capture</MenuItem>
        <MenuItem $w={71}>Window</MenuItem>
        <MenuItem $w={40}>Help</MenuItem>
        <StatusIcons />
      </MenuBar>

      <BrowserWindow>
        <TabStrip>
          <WindowButtons><WindowButton /><WindowButton /><WindowButton /></WindowButtons>
          <SiteTab w={195} ls={-0.28} active title="Please Log In" icon={<CanvasRing />} />
          <SiteTab w={195} ls={-0.3} title="Launchpad" icon={<PageIcon />} />
          <SiteTab w={200} ls={-0.12} fade title="jen_gilbert | Chorus Frogs" icon={<HashIcon />} />
          <NewTab width="34" height="17" viewBox="0 0 34 17">
            <path d="M3 .5h23q2 0 3 2.500l3 10q1 3-2 3H8q-2 0-3-2.500l-4-10Q0 .5 3 .5z" fill="#e9e9e9" stroke="#bdbdbd" />
          </NewTab>
          <UserButton>Dana</UserButton>
          <Expand width="15" height="15" viewBox="0 0 15 15" fill="#b3b3b3">
            <path d="M7 1h7v7l-2.500-2.500L9 8 7 6l2.500-2.500zM1 7l2 2 2-2 2 2-2 2 2 2.500H.5V7z" />
          </Expand>
        </TabStrip>

        <Toolbar>
          <NavButtons>
            <svg width="16" height="14" viewBox="0 0 16 14" fill="none" stroke="#7d7d7d" strokeWidth="2.500"><path d="M8 1L2 7l6 6M2 7h14" /></svg>
            <svg width="16" height="14" viewBox="0 0 16 14" fill="none" stroke="#c8c8c8" strokeWidth="2.500"><path d="M8 1l6 6-6 6M14 7H0" /></svg>
            <svg width="16" height="16" viewBox="0 0 16 16" fill="none" stroke="#7d7d7d" strokeWidth="2.500"><path d="M13.500 10.500a6 6 0 1 1-1-6.500" /><path d="M15.500.5V7H9z" fill="#7d7d7d" stroke="none" /></svg>
          </NavButtons>
          <Omnibox>
            <svg width="12" height="16" viewBox="0 0 12 16">
              <path d="M2.500 8V4.500a3.500 3.500 0 0 1 7 0V8" fill="none" stroke="#8b8b8b" strokeWidth="1.700" />
              <rect x="0.500" y="7" width="11" height="8.500" rx="1" fill="#8ad167" stroke="#559b3c" />
            </svg>
            <Url><UrlScheme>https</UrlScheme>://<UrlHost>devbootcamp.instructure.com</UrlHost>/login?needs_cookies=1</Url>
            <svg width="18" height="18" viewBox="0 0 18 18" fill="#fff" stroke="#777" strokeWidth="1.200" strokeLinejoin="round">
              <path d="M9 1l2.300 5.400 5.900.5-4.500 3.900 1.400 5.700L9 13.400l-5.100 3.100 1.400-5.700L.8 6.900l5.900-.5z" />
            </svg>
          </Omnibox>
          <ToolbarEnd>
            <svg width="19" height="19" viewBox="0 0 19 19">
              <circle cx="9.500" cy="9.500" r="9.200" fill="#2593b8" /><circle cx="9.500" cy="9.500" r="7.800" fill="#5cc6e4" /><circle cx="9.500" cy="9" r="4.600" fill="#132a3d" /><path d="M9.500 9V5a4.500 4.500 0 0 1 4.200 4z" fill="#b8d8e6" />
            </svg>
            <svg width="13" height="13" viewBox="0 0 13 13" stroke="#7a7a7a" strokeWidth="2.600"><path d="M0 1.500h13M0 6.500h13M0 11.500h13" /></svg>
          </ToolbarEnd>
        </Toolbar>

        <Page>
          <Sidebar>
            <LogoBox><Logo /></LogoBox>
            <NavItem $h={65} $gap={7}><NavIcon><DashboardIcon /></NavIcon>Dashboard</NavItem>
            <NavItem $h={64} $gap={5}><NavIcon><CoursesIcon /></NavIcon>Courses</NavItem>
            <NavItem $h={65}><NavIcon><CalendarIcon /></NavIcon>Calendar</NavItem>
            <NavItem $h={66}><NavIcon><InboxIcon /></NavIcon>Inbox</NavItem>
            <NavItem $h={60}><NavIcon><KeyIcon /></NavIcon>Login</NavItem>
            <NavItem $h={54} $gap={5} $last><NavIcon><HelpIcon /></NavIcon>Help</NavItem>
          </Sidebar>
          <Content>
            <Notice>
              <NoticeHeader>
                <WarningIcon />
                <NoticeTitle>Cookies Required</NoticeTitle>
              </NoticeHeader>
              <NoticeText>
                Cookies are not enabled on your browser. Please adjust this<br />
                in your security preferences before continuing.
              </NoticeText>
            </Notice>
            <Footer>
              <Brand>BY INSTRUCTURE</Brand>
              <FooterLinks>
                <FooterLink>User Research</FooterLink>
                <FooterLink>Privacy policy</FooterLink>
                <FooterLink>Terms of service</FooterLink>
                <FooterLink>Facebook</FooterLink>
                <FooterLink>Twitter</FooterLink>
              </FooterLinks>
            </Footer>
          </Content>
        </Page>
      </BrowserWindow>

      <DockArea>
        <Shelf />
        <ShelfEdge />
        <DockRow>
          {dockItems.map((d) => (
            <DockSlot key={d.name}>
              {d.icon}
              <Reflection $c={d.glow} />
              <RunningLight $on={d.on} />
            </DockSlot>
          ))}
          <DockSlot $w={20}><DockDivider /></DockSlot>
          <DockSlot $w={42}><Documents /></DockSlot>
          <DockSlot $w={26} />
          <DockSlot $w={18}><MinimizedPhoto /></DockSlot>
          <DockSlot $w={42}><Trash /></DockSlot>
        </DockRow>
      </DockArea>
    </Desktop>
  </>
);

export default App;
